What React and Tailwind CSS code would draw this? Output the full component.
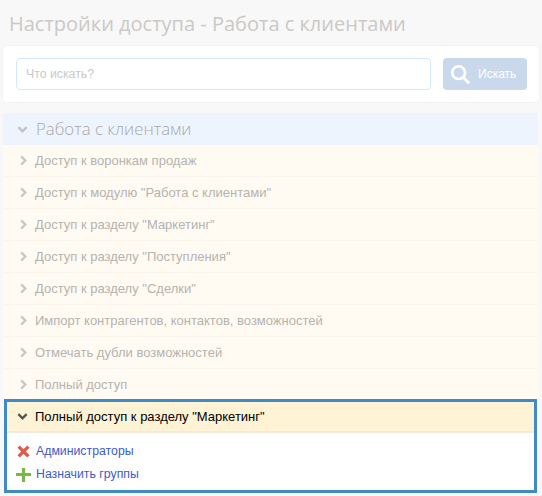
import React from "react";

const rows = [
  "Доступ к воронкам продаж",
  'Доступ к модулю "Работа с клиентами"',
  'Доступ к разделу "Маркетинг"',
  'Доступ к разделу "Поступления"',
  'Доступ к разделу "Сделки"',
  "Импорт контрагентов, контактов, возможностей",
  "Отмечать дубли возможностей",
  "Полный доступ",
];

function Chevron({ down, className }) {
  return (
    <svg viewBox="0 0 12 12" className={className}>
      <path
        d={down ? "M1.5 3.5 L6 8 L10.5 3.5" : "M3.5 1.5 L8 6 L3.5 10.5"}
        fill="none"
        stroke="currentColor"
        strokeWidth="2.6"
      />
    </svg>
  );
}

export default function App() {
  return (
    <div className="w-[542px] h-[496px] overflow-hidden bg-[#f8f8f8] font-['Liberation_Sans',sans-serif]">
      <h1 className="pl-[9px] pt-[11px] h-[46px] font-['Open_Sans',sans-serif] text-[20px] leading-[26px] text-[#cbc9c7]">
        Настройки доступа - Работа с клиентами
      </h1>

      <div className="ml-[3px] w-[536px] h-[56px] bg-white rounded shadow-[0_0_2px_rgba(0,0,0,0.08)] flex items-center gap-[12px] pl-[13px]">
        <div className="w-[415px] h-[32px] border border-[#d3e8fb] rounded-sm pl-[9px] flex items-center text-[12.3px] text-[#c9c9c9]">
          Что искать?
        </div>
        <div className="w-[84px] h-[32px] bg-[#cad8ec] rounded-sm flex items-center pl-[7px] gap-[8px] text-[12px] text-white">
          <svg viewBox="0 0 22 22" className="w-[20px] h-[20px]">
            <circle cx="9.5" cy="9.5" r="7" fill="none" stroke="#fff" strokeWidth="3" />
            <path d="M14.5 14.5 L20 20" stroke="#fff" strokeWidth="3.2" strokeLinecap="round" />
          </svg>
          Искать
        </div>
      </div>

      <div className="mt-[11px] ml-[3px] w-[535px]">
        <div className="h-[32px] bg-[#eef4fd] flex items-center pl-[14px] gap-[8px] font-['Open_Sans',sans-serif] font-light text-[16.8px] text-[#a9a9a9]">
          <Chevron down className="w-[11px] h-[11px] text-[#bfc3c8]" />
          Работа с клиентами
        </div>
        {rows.map((r) => (
          <div
            key={r}
            className="h-[32px] bg-[#fffbf3] border-b border-[#f9f5ec] flex items-center pl-[15px] gap-[6px] text-[13px] text-[#b5b3af]"
          >
            <Chevron className="w-[11px] h-[11px] text-[#c8c8c8]" />
            {r}
          </div>
        ))}
      </div>

      <div className="-mt-[2px] ml-[4px] w-[533px] h-[94px] border-[3px] border-[#3f8bc6] bg-white">
        <div className="h-[31px] bg-[#fef3d5] border-b-2 border-[#f2eadb] flex items-center pl-[10px] gap-[7px] text-[13px] text-black">
          <Chevron down className="w-[11px] h-[11px] text-[#555]" />
          Полный доступ к разделу "Маркетинг"
        </div>
        <div className="pt-[7px] pl-[9px] text-[12.3px] text-[#3c5bc9]">
          <div className="h-[23px] flex items-center gap-[6px] ml-[1px]">
            <svg viewBox="0 0 12 12" className="w-[13px] h-[13px]">
              <path d="M1.5 1.5 L10.5 10.5 M10.5 1.5 L1.5 10.5" stroke="#e05a4a" strokeWidth="3" />
            </svg>
            Администраторы
          </div>
          <div className="h-[23px] flex items-center gap-[5px]">
            <svg viewBox="0 0 15 15" className="w-[15px] h-[15px]">
              <path d="M7.5 1 V15 M0 7.5 H15" stroke="#7ab648" strokeWidth="3.2" />
            </svg>
            Назначить группы
          </div>
        </div>
      </div>
    </div>
  );
}
